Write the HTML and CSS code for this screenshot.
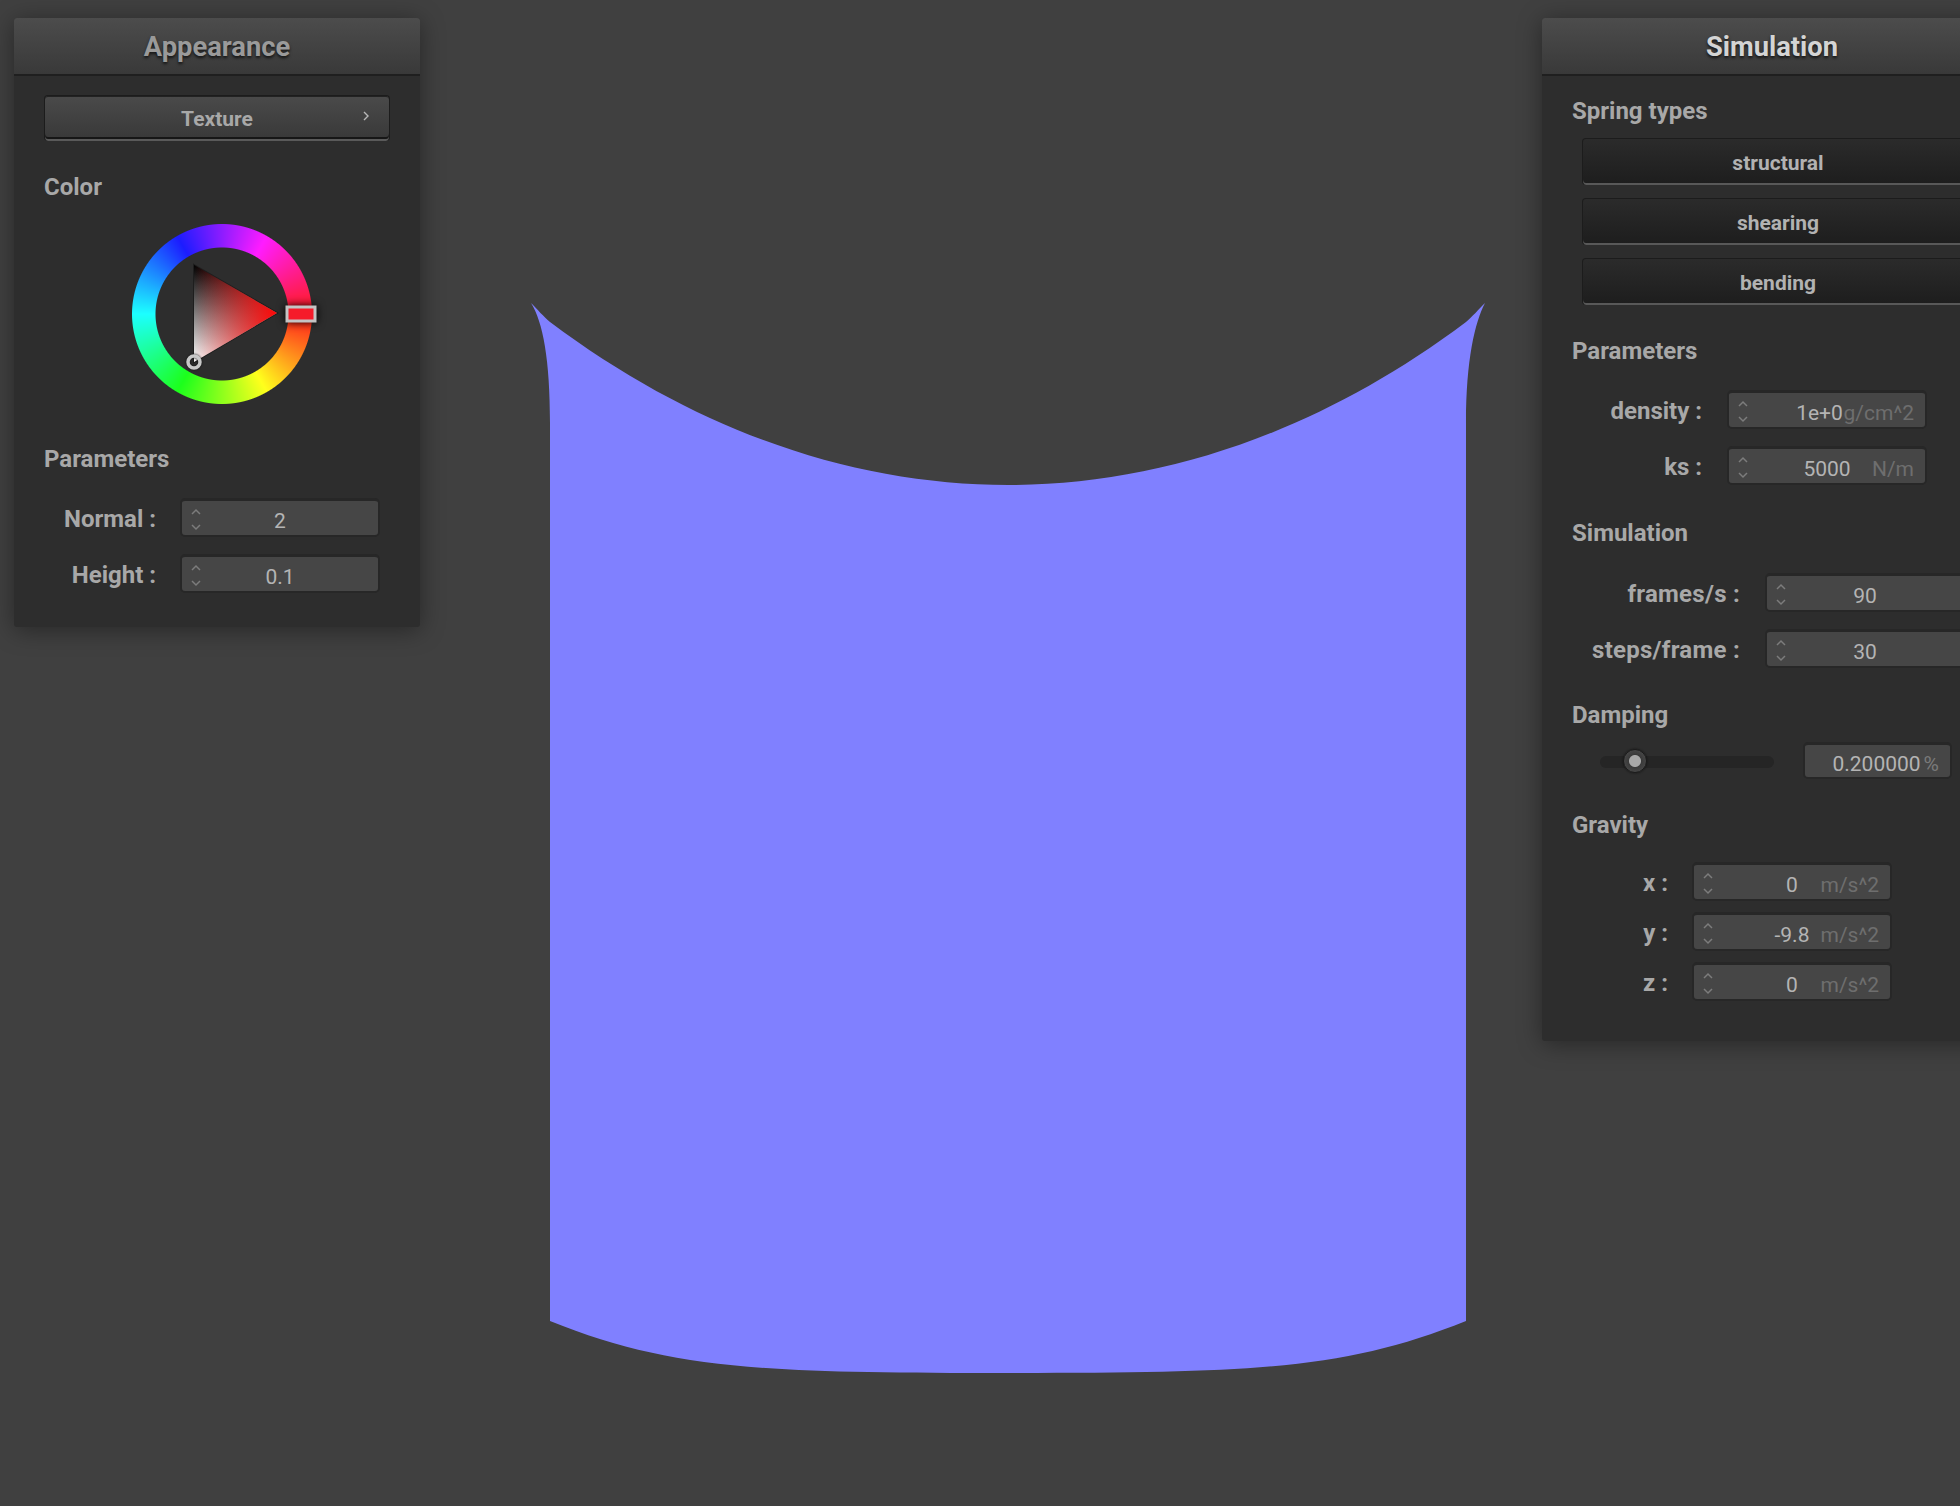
FILE: index.html
```html
<!DOCTYPE html>
<html lang="en">
<head>
    <meta charset="UTF-8">
    <title>Cloth Simulation</title>
    <link rel="stylesheet" href="styles.css">
</head>
<body>
    <!-- cloth mesh in the viewport -->
    <svg class="cloth" viewBox="0 0 1960 1506" aria-hidden="true">
        <path d="M531 303 C537 309 544 317 550 322 C700 434.5 858 485 1008 485 C1158 485 1316 434.5 1466 322 C1472 317 1479 309 1485 303 C1475 322 1466 360 1466 423 L1466 1321 C1346 1369 1258 1373 1008 1373 C758 1373 670 1369 550 1321 L550 423 C550 360 543 322 531 303 Z"/>
    </svg>

    <!-- Appearance window -->
    <section class="window window-appearance">
        <header class="window-title">Appearance</header>
        <div class="window-body">
            <button class="popup-btn">
                Texture
                <svg class="popup-arrow" viewBox="0 0 6 10"><path d="M1 1 5 5 1 9"/></svg>
            </button>

            <h2 class="group-label group-color">Color</h2>
            <div class="wheel">
                <div class="wheel-ring"></div>
                <svg class="wheel-marks" viewBox="110 210 220 200">
                    <defs>
                        <linearGradient id="shade" x1="0" y1="0" x2="0" y2="1">
                            <stop offset="0" stop-color="#000"/>
                            <stop offset="1" stop-color="#fff"/>
                        </linearGradient>
                        <linearGradient id="hue" x1="1" y1="0" x2="0" y2="0">
                            <stop offset="0" stop-color="#ff0808"/>
                            <stop offset="1" stop-color="#ff0808" stop-opacity="0"/>
                        </linearGradient>
                    </defs>
                    <polygon class="tri-edge" points="194,265 277,313 194,362"/>
                    <polygon fill="url(#shade)" points="194,265 277,313 194,362"/>
                    <polygon fill="url(#hue)" points="194,265 277,313 194,362"/>
                    <rect class="hue-mark" x="287" y="307" width="28" height="14"/>
                    <circle class="value-mark" cx="194" cy="362" r="6"/>
                </svg>
            </div>

            <h2 class="group-label group-params">Parameters</h2>
            <div class="params params-appearance">
                <label class="row-label">Normal :</label>
                <div class="field">
                    <svg class="spin" viewBox="0 0 10 24"><path d="M1 6 5 2 9 6M1 17 5 21 9 17"/></svg>
                    2
                </div>
                <label class="row-label">Height :</label>
                <div class="field">
                    <svg class="spin" viewBox="0 0 10 24"><path d="M1 6 5 2 9 6M1 17 5 21 9 17"/></svg>
                    0.1
                </div>
            </div>
        </div>
    </section>

    <!-- Simulation window, runs off the right edge -->
    <section class="window window-simulation">
        <header class="window-title">Simulation</header>
        <div class="window-body">
            <h2 class="group-label group-springs">Spring types</h2>
            <div class="toggles">
                <button class="toggle-btn">structural</button>
                <button class="toggle-btn">shearing</button>
                <button class="toggle-btn">bending</button>
            </div>

            <h2 class="group-label group-mass">Parameters</h2>
            <div class="params params-mass">
                <label class="row-label">density :</label>
                <div class="field field-tight">
                    <svg class="spin" viewBox="0 0 10 24"><path d="M1 6 5 2 9 6M1 17 5 21 9 17"/></svg>
                    1e+0<span class="unit">g/cm^2</span>
                </div>
                <label class="row-label">ks :</label>
                <div class="field">
                    <svg class="spin" viewBox="0 0 10 24"><path d="M1 6 5 2 9 6M1 17 5 21 9 17"/></svg>
                    5000<span class="unit">N/m</span>
                </div>
            </div>

            <h2 class="group-label group-sim">Simulation</h2>
            <div class="params params-sim">
                <label class="row-label">frames/s :</label>
                <div class="field">
                    <svg class="spin" viewBox="0 0 10 24"><path d="M1 6 5 2 9 6M1 17 5 21 9 17"/></svg>
                    90
                </div>
                <label class="row-label">steps/frame :</label>
                <div class="field">
                    <svg class="spin" viewBox="0 0 10 24"><path d="M1 6 5 2 9 6M1 17 5 21 9 17"/></svg>
                    30
                </div>
            </div>

            <h2 class="group-label group-damping">Damping</h2>
            <div class="damping">
                <div class="slider"><span class="slider-knob"></span></div>
                <div class="field field-plain">0.200000<span class="unit-inline">%</span></div>
            </div>

            <h2 class="group-label group-gravity">Gravity</h2>
            <div class="params params-gravity">
                <label class="row-label">x :</label>
                <div class="field">
                    <svg class="spin" viewBox="0 0 10 24"><path d="M1 6 5 2 9 6M1 17 5 21 9 17"/></svg>
                    0<span class="unit">m/s^2</span>
                </div>
                <label class="row-label">y :</label>
                <div class="field">
                    <svg class="spin" viewBox="0 0 10 24"><path d="M1 6 5 2 9 6M1 17 5 21 9 17"/></svg>
                    -9.8<span class="unit">m/s^2</span>
                </div>
                <label class="row-label">z :</label>
                <div class="field">
                    <svg class="spin" viewBox="0 0 10 24"><path d="M1 6 5 2 9 6M1 17 5 21 9 17"/></svg>
                    0<span class="unit">m/s^2</span>
                </div>
            </div>
        </div>
    </section>
</body>
</html>
```

FILE: styles.css
```css
html, body {
    margin: 0;
    padding: 0;
    width: 1960px;
    height: 1506px;
    overflow: hidden;
    background: #404040;
    font-family: Roboto, "Liberation Sans", sans-serif;
}

/* Mesh drawn in the viewport */
.cloth {
    position: absolute;
    left: 0;
    top: 0;
    width: 1960px;
    height: 1506px;
}
.cloth path {
    fill: #8080ff;
}

/* Floating windows */
.window {
    position: absolute;
    top: 18px;
    background: #2d2d2d;
    border-radius: 3px;
    box-shadow: 0 3px 24px rgba(0, 0, 0, 0.4);
}
.window-appearance {
    left: 14px;
    width: 406px;
    color: #a0a0a0;
}
.window-simulation {
    left: 1542px;
    width: 460px;
}

.window-title {
    height: 56px;
    line-height: 58px;
    text-align: center;
    font-size: 27.3px;
    font-weight: 700;
    color: #d4d4d4;
    text-shadow: 0 2px 3px rgba(0, 0, 0, 0.7);
    background: linear-gradient(180deg, #4c4c4c, #393939);
    border-bottom: 2px solid #1f1f1f;
    border-radius: 3px 3px 0 0;
}
.window-appearance .window-title {
    color: #9a9a9a;
}

.window-body {
    padding: 0 30px 34px;
    display: flex;
    flex-direction: column;
    align-items: flex-start;
}
.window-simulation .window-body {
    padding-bottom: 40px;
}

/* Section labels */
.group-label {
    margin: 0;
    height: 30px;
    line-height: 30px;
    font-size: 24px;
    font-weight: 700;
    color: #a8a8a8;
}
.group-color { margin-top: 31px; }
.group-params { margin-top: 40px; }
.group-springs { margin-top: 20px; }
.group-mass { margin-top: 31px; }
.group-sim { margin-top: 33px; }
.group-damping { margin-top: 32px; }
.group-gravity { margin-top: 31px; }

/* Texture popup button */
.popup-btn {
    position: relative;
    margin: 19px 0 0;
    width: 346px;
    height: 46px;
    padding: 0;
    font: 700 21px Roboto, sans-serif;
    color: #a8a8a8;
    border: 1px solid #1c1c1c;
    border-bottom: 0;
    border-radius: 4px;
    background: linear-gradient(180deg, #4a4a4a, #383838);
    box-shadow: inset 0 -2px 0 #5a5a5a, inset 0 -4px 0 #161616, inset 0 1px 0 #222;
}
.popup-arrow {
    position: absolute;
    right: 20px;
    top: 15px;
    width: 6px;
    height: 10px;
    fill: none;
    stroke: #b8b8b8;
    stroke-width: 1.4;
}

/* Color wheel */
.wheel {
    position: relative;
    margin: 22px 0 0 88px;
    width: 180px;
    height: 180px;
}
.wheel-ring {
    position: absolute;
    inset: -1px;
    border-radius: 50%;
    background: conic-gradient(from 90deg, #ff1c1c, #ffff1c, #1cff1c, #1cffff, #1c1cff, #ff1cff, #ff1c1c);
    -webkit-mask: radial-gradient(circle, transparent 66px, #000 67px, #000 89.5px, transparent 90.5px);
    mask: radial-gradient(circle, transparent 66px, #000 67px, #000 89.5px, transparent 90.5px);
}
.wheel-marks {
    position: absolute;
    left: -22px;
    top: -14px;
    width: 220px;
    height: 200px;
}
.tri-edge {
    fill: none;
    stroke: #1e1e1e;
    stroke-width: 2;
}
.hue-mark {
    fill: #f51b2a;
    stroke: #c4c4c4;
    stroke-width: 3;
    filter: drop-shadow(0 0 4px #000);
}
.value-mark {
    fill: none;
    stroke: #c8c8c8;
    stroke-width: 3.5;
    filter: drop-shadow(0 0 1px #111);
}

/* Label + field rows */
.params {
    display: grid;
    column-gap: 24px;
    row-gap: 17px;
    margin-top: 24px;
}
.params-appearance { grid-template-columns: 112px 200px; }
.params-mass { grid-template-columns: 130px 200px; column-gap: 25px; }
.params-sim { grid-template-columns: 168px 200px; column-gap: 25px; margin-top: 25px; }
.params-sim .row-label { letter-spacing: 0.27px; }
.params-gravity { grid-template-columns: 96px 200px; row-gap: 11px; margin-top: 22px; }

.row-label {
    align-self: center;
    text-align: right;
    font-size: 24px;
    font-weight: 700;
    color: #a8a8a8;
    white-space: nowrap;
    padding-top: 3px;
}

.field {
    position: relative;
    box-sizing: border-box;
    height: 39px;
    line-height: 40px;
    text-align: center;
    font-size: 21px;
    color: #b4b4b4;
    background: #464646;
    border: 2px solid #272727;
    border-top-width: 3px;
    border-radius: 5px;
}
.field-tight {
    padding-right: 15px;
}
.field-plain {
    width: 149px;
    height: 37px;
    line-height: 38px;
    text-align: right;
    padding-right: 11px;
}
.spin {
    position: absolute;
    left: 9px;
    top: 7px;
    width: 10px;
    height: 24px;
    fill: none;
    stroke: #7c7c7c;
    stroke-width: 1.5;
}
.unit {
    position: absolute;
    right: 11px;
    top: 0;
    color: #6e6e6e;
}
.unit-inline {
    margin-left: 3px;
    color: #7a7a7a;
}

/* Toggle buttons */
.toggles {
    display: flex;
    flex-direction: column;
    gap: 13px;
    margin: 12px 0 0 10px;
}
.toggle-btn {
    box-sizing: border-box;
    width: 390px;
    height: 47px;
    padding: 1px 0 0 2px;
    font: 700 21px Roboto, sans-serif;
    color: #b2b2b2;
    border: 1px solid #1c1c1c;
    border-bottom: 0;
    border-radius: 4px;
    background: linear-gradient(180deg, #2b2b2b, #1d1d1d);
    box-shadow: inset 0 -2px 0 #585858;
}

/* Damping slider */
.damping {
    display: flex;
    align-items: flex-start;
    gap: 29px;
    margin: 12px 0 0 28px;
}
.slider {
    position: relative;
    margin-top: 14px;
    width: 174px;
    height: 12px;
    background: #252525;
    border-radius: 6px;
}
.slider-knob {
    position: absolute;
    left: 23px;
    top: -7px;
    box-sizing: border-box;
    width: 24px;
    height: 24px;
    border-radius: 50%;
    border: 1px solid #1b1b1b;
    background: radial-gradient(circle, #a8a8a8 0, #a8a8a8 5.5px, #3a3a3a 6.5px, #464646 11px);
    box-shadow: 0 0 2px #111;
}
```
